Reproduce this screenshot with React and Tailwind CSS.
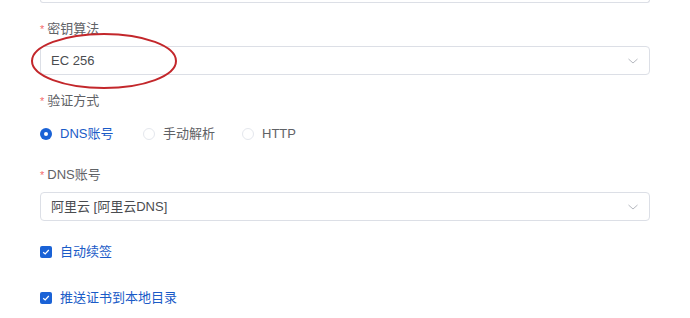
import React from 'react';

const font = { fontFamily: '"Liberation Sans", "Noto Sans CJK SC", sans-serif' };

const Label = ({ children, className = '' }) => (
    <div className={`flex items-center h-5 text-[13px] text-[#5f6266] ${className}`}>
        <span className="text-[#f56c6c] mr-[3px] text-[11px]">*</span>
        {children}
    </div>
);

const Chevron = () => (
    <svg width="12" height="12" viewBox="0 0 12 12" className="text-[#b5b8bf]">
        <path d="M1.5 4 L6 8 L10.5 4" fill="none" stroke="currentColor" strokeWidth="1" />
    </svg>
);

const SelectBox = ({ value, className = '' }) => (
    <div className={`flex items-center justify-between h-[29px] border border-[#dcdfe6] rounded-[4px] pl-[10px] pr-[10px] bg-white ${className}`}>
        <span className="text-[13px] text-[#4a4c50]">{value}</span>
        <Chevron />
    </div>
);

const Radio = ({ checked, label }) => (
    <div className="flex items-center">
        {checked ? (
            <span className="w-[12px] h-[12px] rounded-full bg-[#1a62d6] flex items-center justify-center">
                <span className="w-[4px] h-[4px] rounded-full bg-white" />
            </span>
        ) : (
            <span className="w-[12px] h-[12px] rounded-full border border-[#e4e7ed] bg-white" />
        )}
        <span className={`ml-[8px] text-[13px] ${checked ? 'text-[#1a5bc7]' : 'text-[#5f6266]'}`}>{label}</span>
    </div>
);

const Checkbox = ({ label, className = '' }) => (
    <div className={`flex items-center h-5 ${className}`}>
        <span className="w-[12px] h-[12px] rounded-[2px] bg-[#1a62d6] flex items-center justify-center">
            <svg width="8" height="8" viewBox="0 0 8 8">
                <path d="M1.2 4.2 L3.2 6 L6.8 2" fill="none" stroke="white" strokeWidth="1.2" />
            </svg>
        </span>
        <span className="ml-[8px] text-[13px] text-[#1a5bc7]">{label}</span>
    </div>
);

export default function App() {
    return (
        <div className="relative w-[690px] h-[318px] bg-white overflow-hidden" style={font}>
            <div className="pl-[40px] w-[650px]">
                <div className="h-[3px] border border-t-0 border-[#dcdfe6] rounded-b-[4px]" />

                <Label className="mt-[16px]">密钥算法</Label>
                <SelectBox value="EC 256" className="mt-[7px]" />

                <Label className="mt-[16px]">验证方式</Label>
                <div className="flex items-center h-5 mt-[13px]">
                    <div className="w-[103px]"><Radio checked label="DNS账号" /></div>
                    <div className="w-[99px]"><Radio label="手动解析" /></div>
                    <Radio label="HTTP" />
                </div>

                <Label className="mt-[21px]">DNS账号</Label>
                <SelectBox value="阿里云 [阿里云DNS]" className="mt-[7px]" />

                <Checkbox label="自动续签" className="mt-[21px]" />
                <Checkbox label="推送证书到本地目录" className="mt-[26px]" />
            </div>

            {/* red annotation ring */}
            <svg className="absolute left-0 top-0 pointer-events-none" width="200" height="100">
                <ellipse cx="104" cy="61" rx="72" ry="27" fill="none" stroke="#c3272b" strokeWidth="2" />
            </svg>
        </div>
    );
}
